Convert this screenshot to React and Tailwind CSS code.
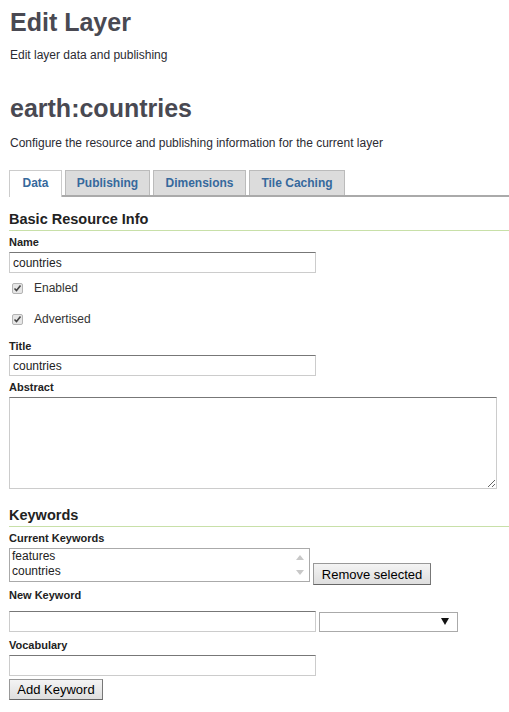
import { useState } from 'react';

const tabs = [
  { name: 'Data', w: 'w-[53px]' },
  { name: 'Publishing', w: 'w-[85px]' },
  { name: 'Dimensions', w: 'w-[93px]' },
  { name: 'Tile Caching', w: 'w-[96px]' },
];

const Label = ({ children, className = '' }) => (
  <div className={`text-[11px] leading-[13px] font-bold text-[#222] ${className}`}>{children}</div>
);

const TextField = ({ value = '', className = '' }) => (
  <input
    defaultValue={value}
    className={`block h-[21px] w-[307px] border border-[#ccc] border-t-[#777] bg-white px-[3px] text-[12px] text-[#222] outline-none ${className}`}
  />
);

const Check = ({ label, className = '' }) => (
  <div className={`flex h-[14px] items-center ${className}`}>
    <span className="ml-[3px] flex h-[11px] w-[11px] items-center justify-center rounded-[2px] border border-[#b4b4b4] bg-[#e6e6e6]">
      <svg width="9" height="9" viewBox="0 0 9 9">
        <path d="M1.5 4.5 L3.5 6.5 L7.5 1.5" fill="none" stroke="#444" strokeWidth="1.6" />
      </svg>
    </span>
    <span className="ml-[11px] text-[12px] leading-[14px] text-[#333]">{label}</span>
  </div>
);

const Button = ({ children, className = '' }) => (
  <button
    className={`h-[21px] border border-[#999] border-r-[#777] border-b-[#666] bg-gradient-to-b from-[#f4f4f4] to-[#dedede] px-[7px] text-[13px] leading-[17px] text-black ${className}`}
  >
    {children}
  </button>
);

const SectionTitle = ({ children, className = '' }) => (
  <div className={`-mr-[9px] border-b border-[#c8e0a8] pb-[2px] text-[14.5px] leading-[17px] font-bold text-[#222] ${className}`}>
    {children}
  </div>
);

export default function App() {
  const [active, setActive] = useState(0);

  return (
    <div className="min-h-[712px] bg-white pl-[9px] font-['Liberation_Sans',Arial,sans-serif] text-[#333]">
      <h1 className="pt-[7px] pl-[1px] text-[25px] leading-[30px] font-bold text-[#494952]">Edit Layer</h1>
      <p className="mt-[11px] pl-[1px] text-[12px] leading-[14px] text-[#2b2b33]">Edit layer data and publishing</p>

      <h2 className="mt-[31px] pl-[1px] text-[25px] leading-[30px] font-bold text-[#494952]">earth:countries</h2>
      <p className="mt-[13px] pl-[1px] text-[12px] leading-[14px] text-[#2b2b33]">
        Configure the resource and publishing information for the current layer
      </p>

      {/* Tabs */}
      <div className="-mr-[9px] mt-[20px] flex items-end gap-[3px] border-b-2 border-[#aaa]">
        {tabs.map((t, i) => (
          <button
            key={t.name}
            onClick={() => setActive(i)}
            className={`${t.w} border border-b-0 text-[12px] font-bold text-[#36699c] ${
              active === i
                ? '-mb-[2px] h-[27px] border-[#ccc] bg-white pb-[2px]'
                : 'h-[25px] border-[#bbb] bg-[#dcdcdc]'
            }`}
          >
            {t.name}
          </button>
        ))}
      </div>

      {/* Basic Resource Info */}
      <SectionTitle className="mt-[14px]">Basic Resource Info</SectionTitle>
      <Label className="mt-[5px]">Name</Label>
      <TextField value="countries" className="mt-[3px]" />
      <Check label="Enabled" className="mt-[8px]" />
      <Check label="Advertised" className="mt-[17px]" />
      <Label className="mt-[14px]">Title</Label>
      <TextField value="countries" className="mt-[2px]" />
      <Label className="mt-[5px]">Abstract</Label>
      <textarea className="mt-[3px] block h-[92px] w-[488px] border border-[#ccc] border-t-[#777] bg-white text-[12px] outline-none" />

      {/* Keywords */}
      <SectionTitle className="mt-[18px]">Keywords</SectionTitle>
      <Label className="mt-[5px]">Current Keywords</Label>
      <div className="mt-[3px] flex items-end">
        <div className="relative h-[34px] w-[301px] border border-[#aaa] bg-white pl-[2px] text-[12px] leading-[15px] text-[#222]">
          <div>features</div>
          <div>countries</div>
          <svg className="absolute right-[5px] top-[6px]" width="8" height="5" viewBox="0 0 8 5">
            <path d="M0 5 L4 0 L8 5 Z" fill="#c8c8c8" />
          </svg>
          <svg className="absolute right-[5px] bottom-[6px]" width="8" height="5" viewBox="0 0 8 5">
            <path d="M0 0 L4 5 L8 0 Z" fill="#c8c8c8" />
          </svg>
        </div>
        <Button className="ml-[3px] -mb-[3px] h-[22px] w-[118px]">Remove selected</Button>
      </div>

      <Label className="mt-[7px]">New Keyword</Label>
      <div className="mt-[9px] flex items-center">
        <TextField />
        <div className="ml-[3px] flex h-[20px] w-[139px] items-center justify-end border border-[#aaa] bg-white pr-[8px]">
          <svg width="8" height="7" viewBox="0 0 8 7">
            <path d="M0 0 L8 0 L4 7 Z" fill="#111" />
          </svg>
        </div>
      </div>

      <Label className="mt-[7px]">Vocabulary</Label>
      <TextField className="mt-[3px]" />
      <Button className="mt-[3px] w-[94px]">Add Keyword</Button>
    </div>
  );
}
